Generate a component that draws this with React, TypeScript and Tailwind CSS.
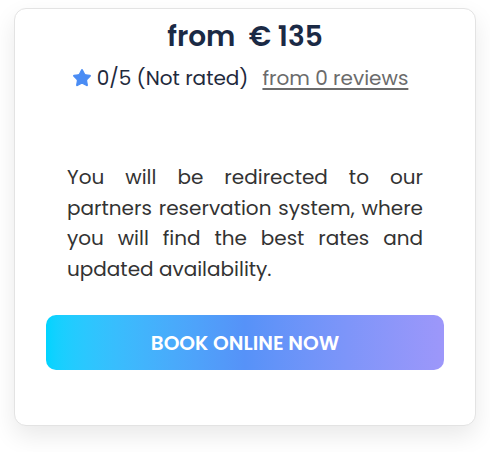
import { Star } from 'lucide-react';

export default function App() {
  return (
    <div className="min-h-screen bg-white pt-[8px] px-[14px]" style={{ fontFamily: '"Poppins", "Open Sans", sans-serif' }}>
      <div className="w-[462px] h-[418px] rounded-xl border border-[#e3e3e3] bg-white shadow-[0_10px_24px_rgba(0,0,0,0.09)] flex flex-col items-center">
        <h2 className="mt-[9px] text-[28px] leading-[38px] font-semibold text-[#1b2a45]">
          from&nbsp; € 135
        </h2>
        <div className="mt-[8px] mr-[10px] flex items-center text-[20px] leading-[28px] text-[#1f2a3d]">
          <Star size={20} className="text-[#4a8cf4] fill-[#4a8cf4] mr-[5px]" strokeWidth={1.5} />
          <span>0/5 (Not rated)</span>
          <a href="#" className="ml-[14px] text-[#6b6b6b] underline underline-offset-[3px]">from 0 reviews</a>
        </div>
        <p className="mt-[70px] w-[356px] text-justify text-[20px] leading-[30.5px] text-[#333333]">
          You will be redirected to our partners reservation system, where you will find the best rates and updated availability.
        </p>
        <button className="mt-[31px] w-[398px] h-[55px] rounded-[10px] bg-gradient-to-r from-[#00d4ff] via-[#5692f8] to-[#9d97fa] text-white text-[20px] font-semibold">
          BOOK ONLINE NOW
        </button>
      </div>
    </div>
  );
}
